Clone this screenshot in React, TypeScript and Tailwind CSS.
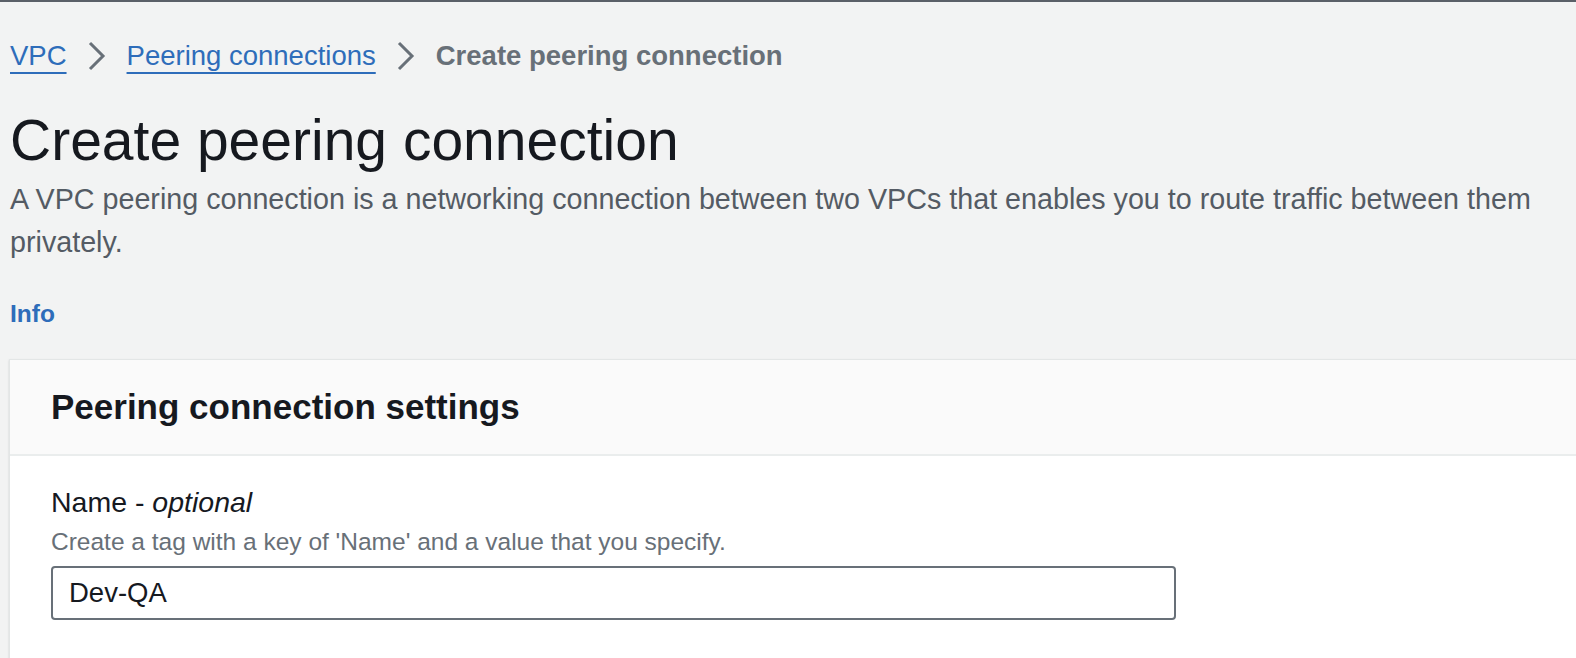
const font = { fontFamily: "'Liberation Sans', Arial, sans-serif" };

function Chevron() {
  return (
    <svg className="w-[20px] h-[30px] mx-[20px] text-[#687078]" viewBox="0 0 20 30" fill="none">
      <path d="M3 2 L16 15 L3 28" stroke="currentColor" strokeWidth="3" />
    </svg>
  );
}

export default function App() {
  return (
    <div className="min-h-[658px] bg-[#f2f3f3] overflow-hidden" style={font}>
      <div className="h-[2px] bg-[#5a6068]" />

      {/* Breadcrumbs */}
      <nav className="mt-[36px] pl-[10px] flex items-center h-[36px] text-[27.5px] leading-[36px]">
        <a className="text-[#2e6dba] underline decoration-2 underline-offset-[7px]">VPC</a>
        <Chevron />
        <a className="text-[#2e6dba] underline decoration-2 underline-offset-[7px]">Peering connections</a>
        <Chevron />
        <span className="text-[#687078] font-bold">Create peering connection</span>
      </nav>

      {/* Header */}
      <h1 className="mt-[34px] pl-[10px] text-[57px] leading-[64px] text-[#16191f] font-normal">
        Create peering connection
      </h1>
      <p className="mt-[6px] pl-[10px] pr-[30px] text-[28.7px] leading-[43px] text-[#545b64]">
        A VPC peering connection is a networking connection between two VPCs that enables you to route traffic between them privately.
      </p>
      <div className="mt-[35px] pl-[10px] text-[24.5px] leading-[30px] font-bold text-[#2e6dba]">Info</div>

      {/* Settings container */}
      <section className="mt-[30px] ml-[9px] bg-white border-l border-t border-[#e3e6e6] shadow-[0_1px_2px_rgba(0,28,36,0.15)]">
        <div className="h-[96px] bg-[#fafafa] border-b-2 border-[#eaeded] flex items-center pl-[41px]">
          <h2 className="text-[35px] leading-[40px] font-bold text-[#16191f]">Peering connection settings</h2>
        </div>
        <div className="pl-[41px] pt-[30px] pb-[40px]">
          <label className="block text-[28.5px] leading-[32px] text-[#16191f]">
            Name - <i>optional</i>
          </label>
          <div className="mt-[9px] text-[24.5px] leading-[30px] text-[#687078]">
            Create a tag with a key of 'Name' and a value that you specify.
          </div>
          <div className="mt-[9px] w-[1125px] h-[54px] border-2 border-[#687078] rounded-[4px] flex items-center pl-[16px] text-[27.5px] text-[#16191f]">
            Dev-QA
          </div>
        </div>
      </section>
    </div>
  );
}
